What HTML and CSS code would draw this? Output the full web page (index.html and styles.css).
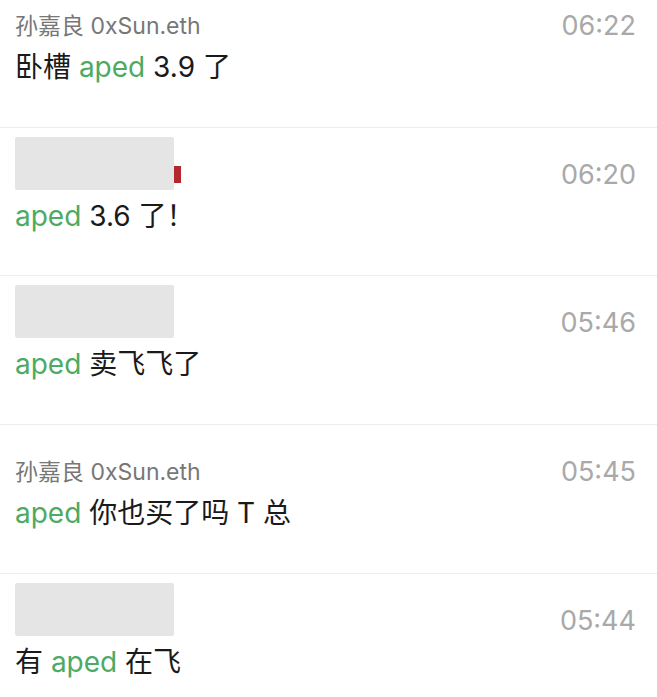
FILE: index.html
```html
<!DOCTYPE html>
<html lang="zh-CN">
<head>
    <meta charset="UTF-8">
    <meta name="viewport" content="width=device-width, initial-scale=1.0">
    <title>aped</title>
    <link rel="stylesheet" href="styles.css">
</head>
<body>
    <div class="list">
        <div class="msg">
            <div class="head">
                <span class="name">孙嘉良 0xSun.eth</span>
                <span class="time">06:22</span>
            </div>
            <p class="text">卧槽 <span class="tag">aped</span> 3.9 了</p>
        </div>

        <div class="msg">
            <div class="head">
                <div class="hidden-name">
                    <span class="blank"></span>
                    <span class="flag"></span>
                </div>
                <span class="time">06:20</span>
            </div>
            <p class="text"><span class="tag">aped</span> 3.6 了！</p>
        </div>

        <div class="msg">
            <div class="head">
                <div class="hidden-name">
                    <span class="blank"></span>
                </div>
                <span class="time">05:46</span>
            </div>
            <p class="text"><span class="tag">aped</span> 卖飞飞了</p>
        </div>

        <div class="msg">
            <div class="head">
                <span class="name">孙嘉良 0xSun.eth</span>
                <span class="time">05:45</span>
            </div>
            <p class="text"><span class="tag">aped</span> 你也买了吗 T 总</p>
        </div>

        <div class="msg">
            <div class="head">
                <div class="hidden-name">
                    <span class="blank"></span>
                </div>
                <span class="time">05:44</span>
            </div>
            <p class="text">有 <span class="tag">aped</span> 在飞</p>
        </div>
    </div>
</body>
</html>
```

FILE: styles.css
```css
body {
    margin: 0;
    padding: 0;
    background: #fff;
    color: #1a1a1a;
    font-family: 'Inter', 'Noto Sans CJK SC', sans-serif;
    overflow: hidden;
}

/* list is scrolled a little, first row is cut off at the top */
.list {
    margin-top: -21px;
}

.msg {
    box-sizing: border-box;
    height: 148.67px;
    padding: 9px 21px 0 15px;
    border-bottom: 1px solid #ececec;
}

.head {
    display: flex;
    justify-content: space-between;
    align-items: flex-end;
    height: 53px;
}

.name {
    font-size: 23px;
    line-height: 30px;
    color: #777;
}

.time {
    font-size: 27px;
    line-height: 30px;
    color: #a9a9a9;
}

.hidden-name {
    display: flex;
    height: 53px;
}

.blank {
    width: 159px;
    height: 53px;
    background-color: #e5e5e5;
    border-radius: 2px;
}

.flag {
    width: 7px;
    height: 17px;
    margin-top: 29px;
    background-color: #b3282d;
}

.text {
    margin: 6px 0 0;
    font-size: 28px;
    line-height: 40px;
}

.tag {
    color: #4daa63;
}
```
